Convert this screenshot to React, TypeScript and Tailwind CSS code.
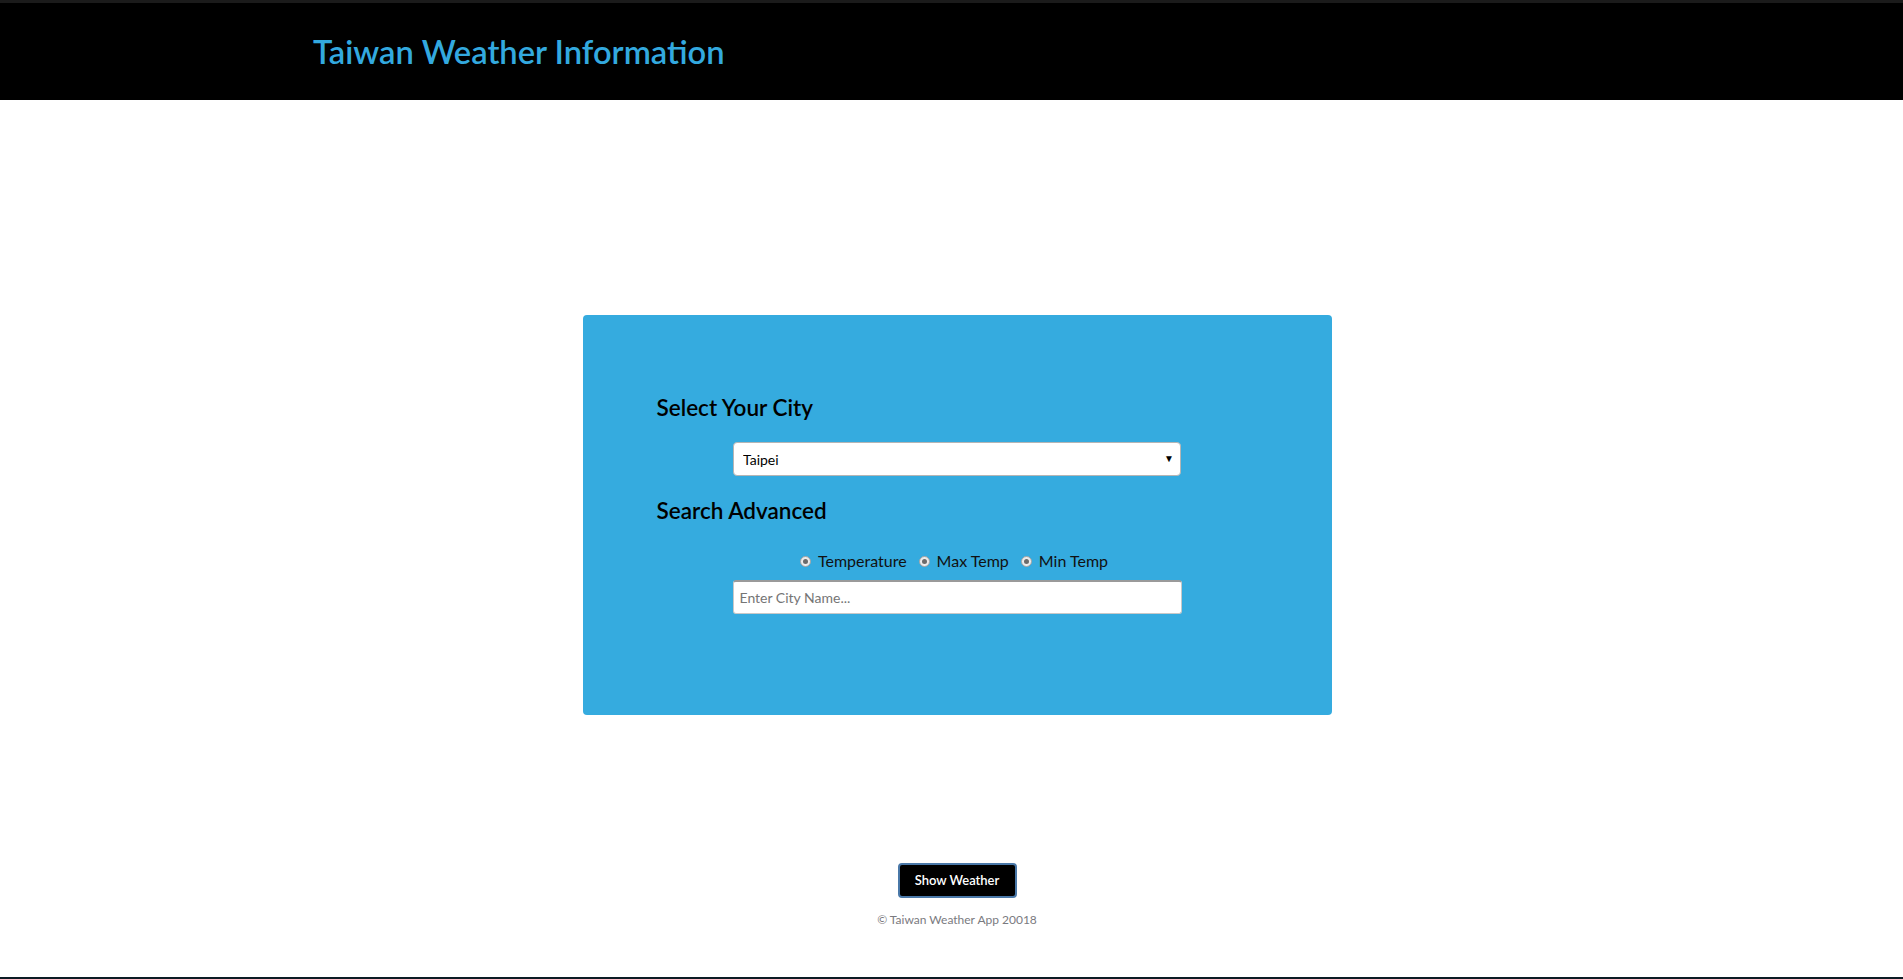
import { ChangeEvent, useState } from 'react';

const cities = ['Taipei', 'New Taipei', 'Taichung', 'Tainan', 'Kaohsiung', 'Hsinchu', 'Keelung'];
const modes = ['Temperature', 'Max Temp', 'Min Temp'];

function Radio({ label, checked, onPick }: { label: string; checked: boolean; onPick: () => void }) {
  return (
    <label className="flex items-center gap-[7px] cursor-pointer" onClick={onPick}>
      <span className="w-[11px] h-[11px] rounded-full border border-[#a3a3a3] bg-[#ececec] flex items-center justify-center">
        <span className={`w-[5px] h-[5px] rounded-full ${checked ? 'bg-[#444]' : 'bg-[#6b6b6b]'}`}></span>
      </span>
      <span className="text-[16px] leading-[20px] text-[#111]">{label}</span>
    </label>
  );
}

export default function App() {
  const [city, setCity] = useState('Taipei');
  const [mode, setMode] = useState('');
  const [query, setQuery] = useState('');

  return (
    <div className="min-h-[979px] bg-white flex flex-col font-['Lato','Liberation_Sans',sans-serif]">
      {/* Header */}
      <header className="bg-black h-[100px] border-t-[3px] border-[#1b1b1b] flex items-center">
        <h1 className="ml-[313px] mt-[2px] text-[32.7px] font-semibold text-[#33a9df] leading-none">
          Taiwan Weather Information
        </h1>
      </header>

      <main className="flex-1 flex flex-col items-center pl-[11px]">
        {/* Search card */}
        <div className="mt-[215px] w-[749px] bg-[#35abdf] rounded-[4px] pt-[80px] pb-[101px] px-[74px]">
          <h3 className="text-[22.5px] leading-[26px] font-semibold text-black">Select Your City</h3>
          <div className="mt-[21px] flex justify-center">
            <div className="relative w-[448px]">
              <select
                value={city}
                onChange={(e: ChangeEvent<HTMLSelectElement>) => setCity(e.target.value)}
                className="appearance-none w-full h-[34px] bg-white border border-[#b5b5b5] rounded-[4px] pl-[9px] text-[14px] text-black outline-none"
              >
                {cities.map((c) => (
                  <option key={c} value={c}>{c}</option>
                ))}
              </select>
              <span className="absolute right-[7px] top-[9px] text-[10px] text-black pointer-events-none">▼</span>
            </div>
          </div>

          <h3 className="mt-[22px] text-[22.5px] leading-[26px] font-semibold text-black">Search Advanced</h3>
          <div className="mt-[27px] flex justify-center gap-[12px] pr-[6px]">
            {modes.map((m) => (
              <Radio key={m} label={m} checked={mode === m} onPick={() => setMode(m)} />
            ))}
          </div>
          <div className="mt-[9px] flex justify-center">
            <input
              value={query}
              onChange={(e: ChangeEvent<HTMLInputElement>) => setQuery(e.target.value)}
              placeholder="Enter City Name..."
              className="w-[449px] h-[34px] bg-white border border-[#c8c8c8] border-t-2 border-t-[#9a9a9a] rounded-[3px] px-[6px] text-[14px] text-black placeholder:text-[#757575] outline-none"
            />
          </div>
        </div>

        <button className="mt-[148px] h-[35px] w-[119px] bg-black text-white text-[13px] font-semibold border-2 border-[#4a78a8] rounded-[4px]">
          Show Weather
        </button>
        <p className="mt-[14px] text-[12px] leading-[16px] text-[#7a7a80]">© Taiwan Weather App 20018</p>
      </main>

      <div className="h-[2px] bg-[#0c1b24]"></div>
    </div>
  );
}
